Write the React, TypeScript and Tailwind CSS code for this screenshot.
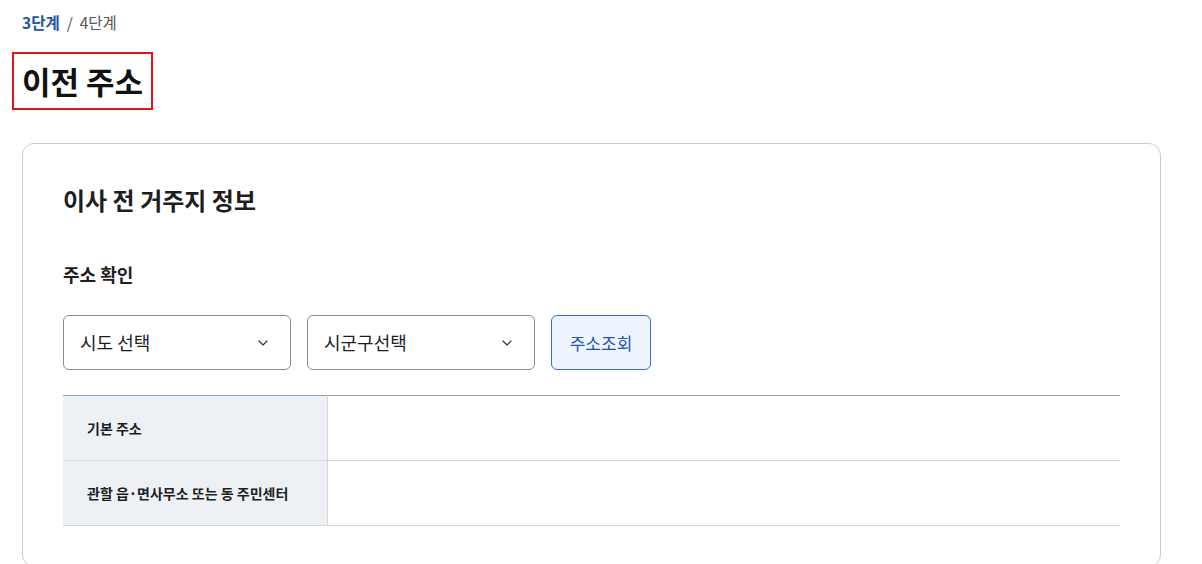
import { ChevronDownIcon } from "lucide-react";

const font = { fontFamily: '"Noto Sans CJK KR", "Noto Sans", sans-serif' };

function Select({ label }: { label: string }) {
  return (
    <button className="flex items-center justify-between w-[228px] h-[55px] pl-4 pr-[19px] border border-[#8a8a8a] rounded-[6px] bg-white text-[18px] text-[#1e1e1e]">
      <span>{label}</span>
      <ChevronDownIcon className="size-[16px] text-[#333]" strokeWidth={1.8} />
    </button>
  );
}

const rows = ["기본 주소", "관할 읍·면사무소 또는 동 주민센터"];

export default function App() {
  return (
    <div style={font} className="min-h-[564px] bg-white pl-[22px] pr-[41px] pt-[11px] overflow-hidden">
      <nav className="flex items-center gap-[7px] text-[15.5px] leading-[22px]">
        <span className="font-bold text-[#2354a8]">3단계</span>
        <span className="text-[#555]">/</span>
        <span className="text-[#555]">4단계</span>
      </nav>

      <h1 className="inline-block mt-[19px] -ml-[10px] px-2 py-2 border-2 border-[#e3131b] text-[31px] leading-[38px] font-bold text-[#111]">
        이전 주소
      </h1>

      <section className="mt-[33px] border border-[#cccccc] rounded-[12px] px-10 pt-10 pb-10">
        <h2 className="text-[24px] leading-[32px] font-bold text-[#1e1e1e]">이사 전 거주지 정보</h2>

        <h3 className="mt-[45px] text-[18px] leading-[26px] font-bold text-[#1e1e1e]">주소 확인</h3>

        <div className="mt-[28px] flex gap-[16px]">
          <Select label="시도 선택" />
          <Select label="시군구선택" />
          <button className="w-[100px] h-[55px] border border-[#3f6fc0] rounded-[6px] bg-[#edf4fd] text-[17px] text-[#2354a8]">
            주소조회
          </button>
        </div>

        <table className="mt-[25px] w-full border-collapse border-t border-t-[#8ea2b2]">
          <tbody>
            {rows.map((r) => (
              <tr key={r} className="border-b border-b-[#d6d6d6]">
                <th className="w-[264px] h-[65px] bg-[#edf0f5] pl-6 text-left text-[14px] font-bold text-[#1e1e1e]">
                  {r}
                </th>
                <td className="border-l border-l-[#d6d6d6]"></td>
              </tr>
            ))}
          </tbody>
        </table>
      </section>
    </div>
  );
}
